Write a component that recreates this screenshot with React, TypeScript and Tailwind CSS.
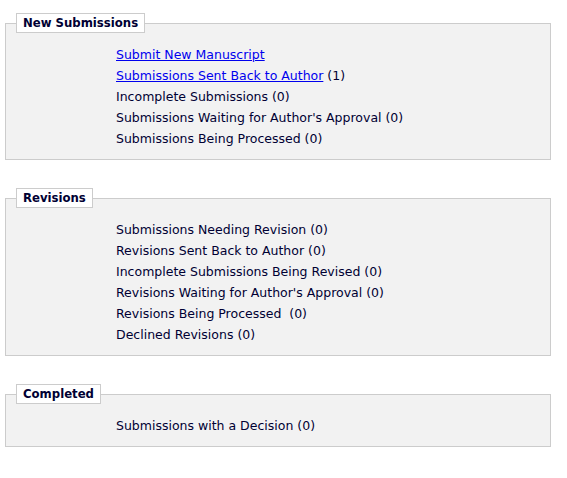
const sections = [
  {
    title: 'New Submissions',
    items: [
      { label: 'Submit New Manuscript', link: true },
      { label: 'Submissions Sent Back to Author', link: true, count: ' (1)' },
      { label: 'Incomplete Submissions (0)' },
      { label: "Submissions Waiting for Author's Approval (0)" },
      { label: 'Submissions Being Processed (0)' },
    ],
  },
  {
    title: 'Revisions',
    items: [
      { label: 'Submissions Needing Revision (0)' },
      { label: 'Revisions Sent Back to Author (0)' },
      { label: 'Incomplete Submissions Being Revised (0)' },
      { label: "Revisions Waiting for Author's Approval (0)" },
      { label: 'Revisions Being Processed\u00a0 (0)' },
      { label: 'Declined Revisions (0)' },
    ],
  },
  {
    title: 'Completed',
    items: [{ label: 'Submissions with a Decision (0)' }],
  },
];

export default function App() {
  return (
    <div className="min-h-[478px] bg-white pt-[13px] text-[12.5px] text-[#000033]" style={{ fontFamily: '"DejaVu Sans", Verdana, sans-serif' }}>
      {sections.map((s) => (
        <fieldset key={s.title} className="ml-[5px] w-[546px] mb-[28px] border border-[#cccccc] bg-[#f2f2f2] p-0 m-0">
          <legend className="ml-[10px] h-[20px] border border-[#cccccc] bg-white px-[6px] text-[11.7px] font-bold leading-[18px] text-[#000033]">
            {s.title}
          </legend>
          <div className="pl-[110px] pt-[11px] pb-[10px]">
            {s.items.map((it) => (
              <div key={it.label} className="h-[21px] leading-[21px] whitespace-nowrap">
                {it.link ? (
                  <a href="#" className="text-[#0000ee] underline">{it.label}</a>
                ) : (
                  it.label
                )}
                {it.count}
              </div>
            ))}
          </div>
        </fieldset>
      ))}
    </div>
  );
}
